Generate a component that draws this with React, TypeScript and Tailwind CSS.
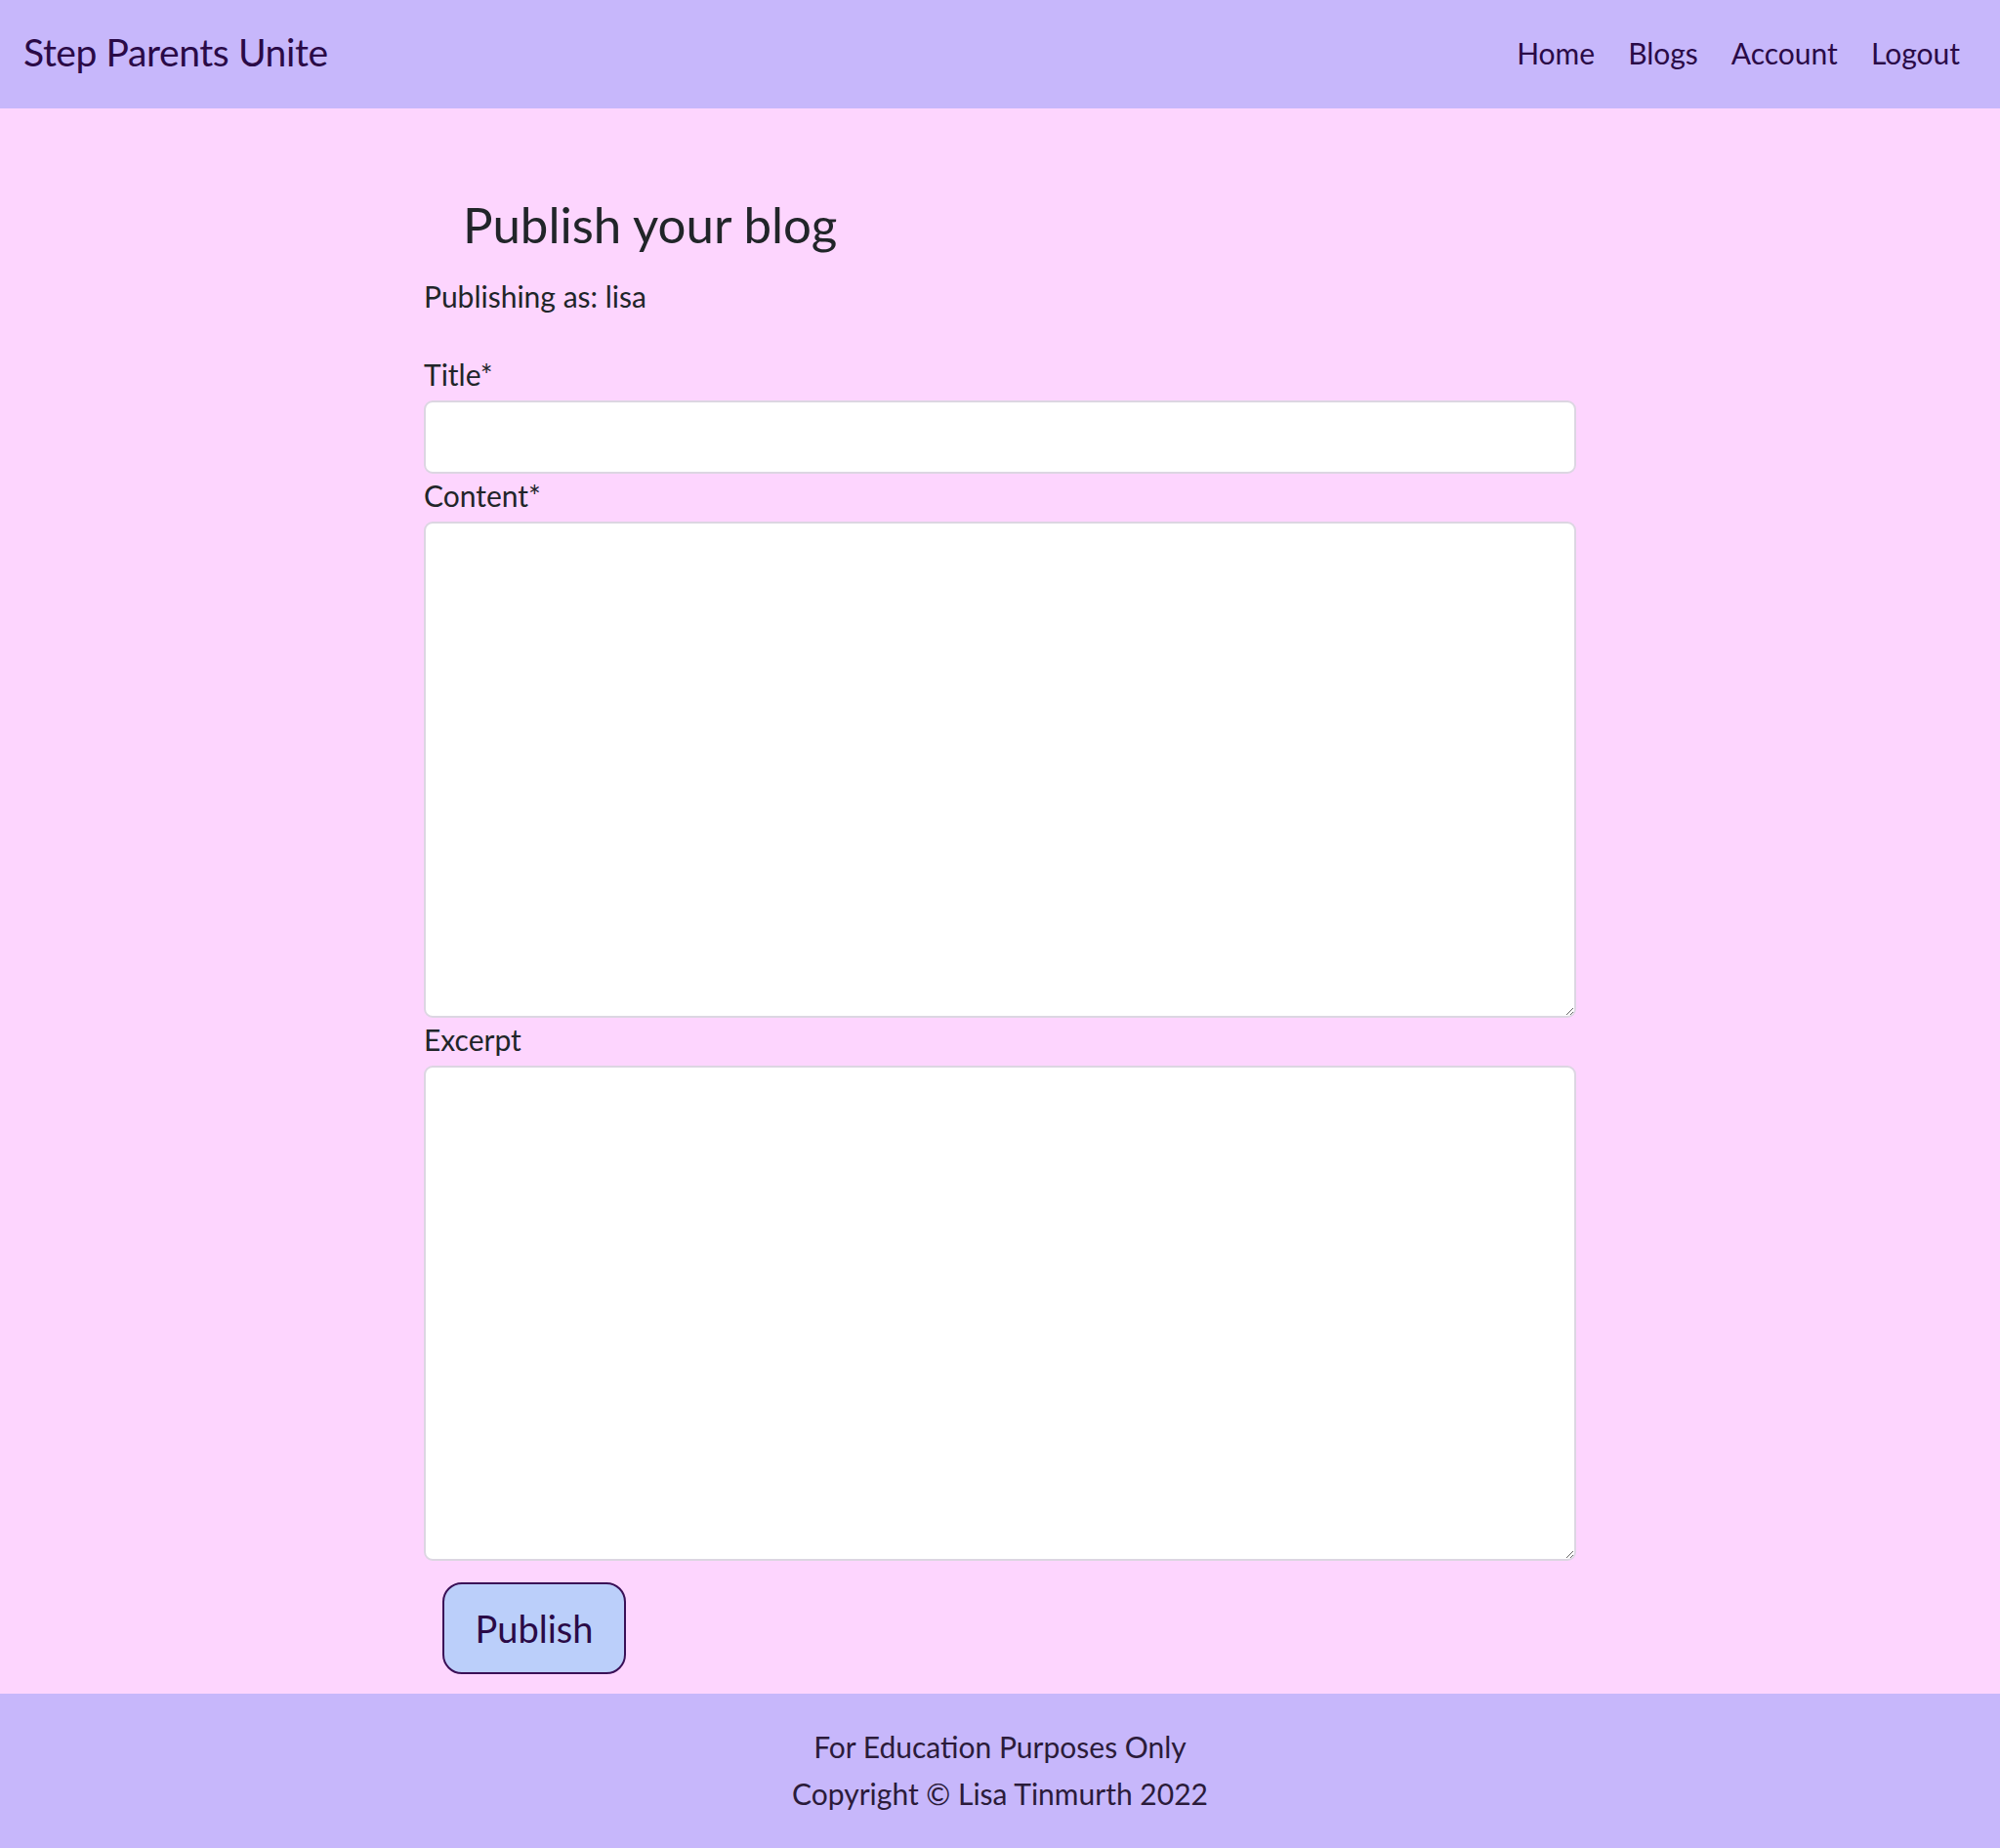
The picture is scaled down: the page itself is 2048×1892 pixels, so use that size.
export default function App() {
  return (
    <div className="flex min-h-[1892px] flex-col bg-[#fdd5fe] font-['Lato','Noto_Sans',sans-serif] text-[#212529]">
      {/* top bar */}
      <nav className="flex h-[111px] items-center justify-between bg-[#c7b7fb] pb-[4px] pl-[24px] pr-[41px] text-[#2a0a47]">
        <a className="text-[39px] leading-none tracking-[-0.4px]">Step Parents Unite</a>
        <ul className="flex items-center gap-[34px] text-[30px] leading-none">
          <li>Home</li>
          <li>Blogs</li>
          <li>Account</li>
          <li>Logout</li>
        </ul>
      </nav>

      <main className="mx-auto w-[1180px] flex-1 pt-[85px]">
        <h3 className="mb-[16px] pl-[40px] text-[51px] leading-[67px]">Publish your blog</h3>
        <p className="mb-[34px] text-[30px] leading-[48px]">Publishing as: lisa</p>

        <form className="flex flex-col">
          <label className="mb-[5px] text-[30px] leading-[44px]">Title*</label>
          <input
            type="text"
            className="h-[75px] rounded-[9px] border-2 border-[#dcd6e2] bg-white px-4 text-[30px] outline-none"
          />
          <label className="mb-[5px] text-[30px] leading-[44px]">Content*</label>
          <textarea className="h-[508px] rounded-[9px] border-2 border-[#dcd6e2] bg-white px-4 py-2 text-[30px] outline-none" />
          <label className="mb-[5px] text-[30px] leading-[44px]">Excerpt</label>
          <textarea className="h-[507px] rounded-[9px] border-2 border-[#dcd6e2] bg-white px-4 py-2 text-[30px] outline-none" />
          <div className="pb-[20px] pl-[19px] pt-[22px]">
            <button
              type="button"
              className="h-[94px] w-[188px] rounded-[20px] border-2 border-[#3a1057] bg-[#bbcffa] text-[38px] text-[#2a0a47]"
            >
              Publish
            </button>
          </div>
        </form>
      </main>

      <footer className="bg-[#c7b7fb] pb-[33px] pt-[30px] text-center text-[30px] leading-[48px] text-[#2b1b3a]">
        <p>For Education Purposes Only</p>
        <p>Copyright © Lisa Tinmurth 2022</p>
      </footer>
    </div>
  )
}
